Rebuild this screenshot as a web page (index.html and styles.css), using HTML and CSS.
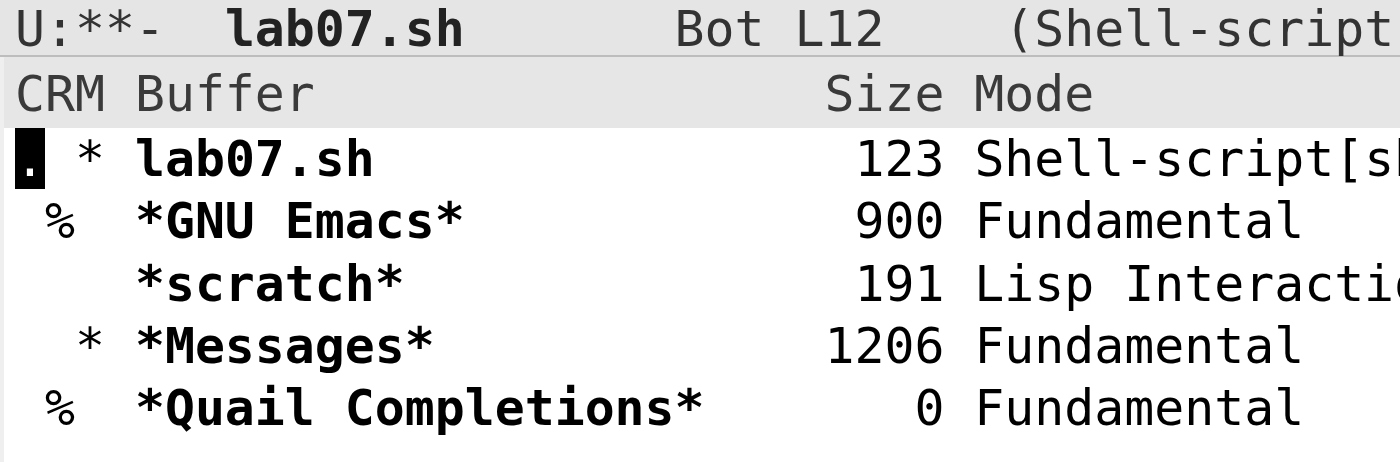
FILE: index.html
```html
<!DOCTYPE html>
<html>
<head>
<meta charset="utf-8">
<link rel="stylesheet" href="styles.css">
</head>
<body>
<div class="frame">
  <div class="modeline"><span class="line">U:**-  <b>lab07.sh</b>       Bot L12    (Shell-script[sh])</span></div>
  <div class="window">
    <div class="fringe"></div>
    <div class="content">
      <div class="header">CRM Buffer                 Size Mode</div>
      <div class="rows">
        <div class="row"><span class="cursor">.</span> * <b>lab07.sh</b>                123 Shell-script[sh]</div>
        <div class="row"> %  <b>*GNU Emacs*</b>             900 Fundamental</div>
        <div class="row">    <b>*scratch*</b>               191 Lisp Interaction</div>
        <div class="row">  * <b>*Messages*</b>             1206 Fundamental</div>
        <div class="row"> %  <b>*Quail Completions*</b>       0 Fundamental</div>
      </div>
    </div>
  </div>
</div>
</body>
</html>
```
FILE: styles.css
```css
html, body {
  margin: 0;
  padding: 0;
  background: #ffffff;
}

.frame {
  width: 1400px;
  height: 462px;
  overflow: hidden;
  display: flex;
  flex-direction: column;
  font-family: "DejaVu Sans Mono", monospace;
  font-size: 49.8px;
}

.modeline {
  height: 55px;
  line-height: 58px;
  background: #e5e5e5;
  color: #333333;
  border-bottom: 2px solid #bdbdbd;
  padding-left: 15px;
  white-space: pre;
  overflow-x: clip;
  overflow-y: visible;
  position: relative;
  z-index: 1;
}

.modeline b {
  font-weight: bold;
  color: #222222;
}

.window {
  flex: 1;
  display: flex;
  min-height: 0;
}

.fringe {
  width: 4px;
  background: #efefef;
  flex: none;
}

.content {
  flex: 1;
  display: flex;
  flex-direction: column;
  padding-left: 11px;
  overflow: hidden;
}

.header {
  margin-left: -11px;
  padding-left: 11px;
  height: 71px;
  box-sizing: border-box;
  padding-top: 6px;
  line-height: 62px;
  background: #e6e6e6;
  color: #3a3a3a;
  white-space: pre;
}

.rows {
  display: flex;
  flex-direction: column;
}

.row {
  height: 62.25px;
  line-height: 62px;
  white-space: pre;
  color: #000000;
}

.row b {
  font-weight: bold;
}

.cursor {
  display: inline-block;
  background: #000000;
  color: #ffffff;
  height: 61px;
  vertical-align: top;
}
```
